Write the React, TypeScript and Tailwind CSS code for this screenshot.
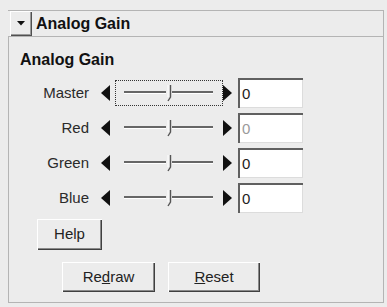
import React from "react";

const font = { fontFamily: '"Liberation Sans", Arial, sans-serif' };

function LeftArrow() {
  return (
    <svg width="10" height="18" viewBox="0 0 10 18" className="block">
      <polygon points="10,1 1,9 10,17" fill="#111" />
    </svg>
  );
}
function RightArrow() {
  return (
    <svg width="10" height="18" viewBox="0 0 10 18" className="block">
      <polygon points="0,1 9,9 0,17" fill="#111" />
    </svg>
  );
}

function Slider({ focused }: { focused?: boolean }) {
  return (
    <div
      className={
        "ml-[5px] w-[108px] h-[26px] flex items-center justify-center " +
        (focused ? "border border-dotted border-[#333]" : "border border-transparent")
      }
    >
      <svg width="92" height="20" viewBox="0 0 92 20" className="block">
        <line x1="1" y1="9" x2="90" y2="9" stroke="#666666" strokeWidth="2" />
        <line x1="1" y1="10.5" x2="90" y2="10.5" stroke="#ffffff" strokeWidth="1" />
        <rect x="43" y="2" width="6" height="14" fill="#ececec" />
        <path d="M47.5 2 L47.5 14 L45 18" stroke="#555555" strokeWidth="1.4" fill="none" />
        <path d="M45 2 L45 14" stroke="#ffffff" strokeWidth="1" fill="none" />
      </svg>
    </div>
  );
}

function Row({ label, focused, dim }: { label: string; focused?: boolean; dim?: boolean }) {
  return (
    <div className="h-[35px] flex items-center">
      <div className="w-[69px] text-right text-[15px] text-[#2a2a2a] leading-none">{label}</div>
      <div className="ml-[11px]">
        <LeftArrow />
      </div>
      <Slider focused={focused} />
      <RightArrow />
      <div className="ml-[5px] w-[65px] h-[30px] bg-white border-t-2 border-l-2 border-[#606060] shadow-[inset_-1px_-1px_0_#dcdcdc] flex items-center pl-[2px]">
        <span className={"text-[15px] leading-none " + (dim ? "text-[#9a9a9a]" : "text-[#222]")}>0</span>
      </div>
    </div>
  );
}

function Btn({ children, className }: { children: React.ReactNode; className?: string }) {
  return (
    <div
      className={
        "flex items-center justify-center bg-[#ececec] text-[15px] text-[#222] shadow-[inset_1px_1px_0_#ffffff,inset_-1px_-1px_0_#404040,inset_-2px_-2px_0_#8a8a8a] " +
        (className || "")
      }
    >
      {children}
    </div>
  );
}

export default function App() {
  return (
    <div className="w-[387px] h-[307px] bg-[#ececec] pt-[10px] pl-[8px] pr-[3px]" style={font}>
      <div className="h-[26px] flex items-center border-t border-r border-[#b4b4b4]">
        <div className="ml-[2px] w-[22px] h-[25px] flex items-center justify-center shadow-[inset_1px_1px_0_#ffffff,inset_-1px_-1px_0_#505050,inset_-2px_-2px_0_#9a9a9a]">
          <svg width="8" height="5" viewBox="0 0 8 5" className="block">
            <polygon points="0,0 8,0 4,4.5" fill="#111" />
          </svg>
        </div>
        <div className="ml-[4px] text-[16px] font-bold text-[#111] leading-none">Analog Gain</div>
      </div>
      <div className="h-[267px] border border-[#b4b4b4] pl-[11px] pt-[14px]">
        <div className="text-[16px] font-bold text-[#111] leading-[18px]">Analog Gain</div>
        <div className="mt-[6px]">
          <Row label="Master" focused />
          <Row label="Red" dim />
          <Row label="Green" />
          <Row label="Blue" />
        </div>
        <Btn className="mt-[4px] ml-[17px] w-[65px] h-[31px]">Help</Btn>
        <div className="mt-[12px] ml-[42px] flex gap-[13px]">
          <Btn className="w-[93px] h-[30px]">
            <span>
              Re<span className="underline">d</span>raw
            </span>
          </Btn>
          <Btn className="w-[92px] h-[30px]">
            <span>
              <span className="underline">R</span>eset
            </span>
          </Btn>
        </div>
      </div>
    </div>
  );
}
